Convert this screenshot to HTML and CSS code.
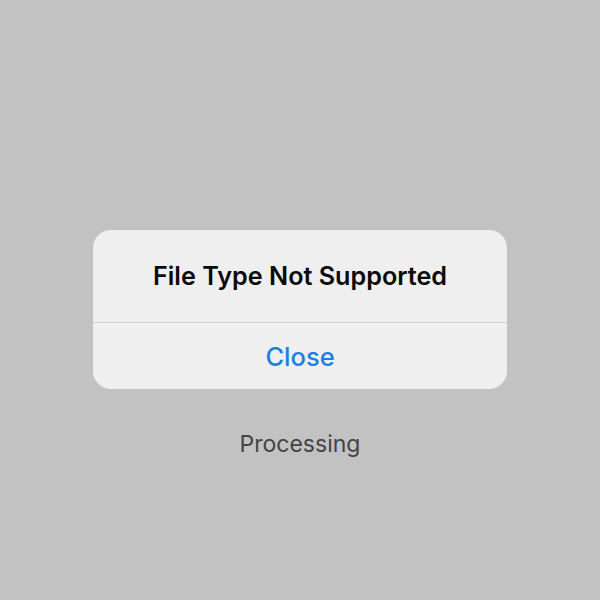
FILE: index.html
```html
<!DOCTYPE html>
<html>
<head>
<meta charset="utf-8">
<link rel="stylesheet" href="styles.css">
</head>
<body>
<div class="screen">
  <div class="alert">
    <div class="alert-title">File Type Not Supported</div>
    <div class="alert-divider"></div>
    <div class="alert-button">Close</div>
  </div>
  <div class="status">Processing</div>
</div>
</body>
</html>
```
FILE: styles.css
```css
html, body {
  margin: 0;
  padding: 0;
  background: #c2c2c2;
}
.screen {
  width: 600px;
  height: 600px;
  display: flex;
  flex-direction: column;
  align-items: center;
  padding-top: 230px;
  box-sizing: border-box;
  font-family: Inter, "Liberation Sans", sans-serif;
}
.alert {
  width: 414px;
  background: #efefef;
  border-radius: 18px;
  display: flex;
  flex-direction: column;
  overflow: hidden;
}
.alert-title {
  height: 92px;
  display: flex;
  align-items: center;
  justify-content: center;
  font-size: 25.2px;
  font-weight: 600;
  color: #0a0a0a;
  padding-bottom: 1px;
  box-sizing: border-box;
}
.alert-divider {
  height: 1px;
  background: #d2d2d2;
}
.alert-button {
  height: 66px;
  display: flex;
  align-items: center;
  justify-content: center;
  font-size: 25.5px;
  font-weight: 500;
  color: #1a7ee6;
}
.status {
  margin-top: 41px;
  font-size: 23px;
  color: #444444;
}
```
